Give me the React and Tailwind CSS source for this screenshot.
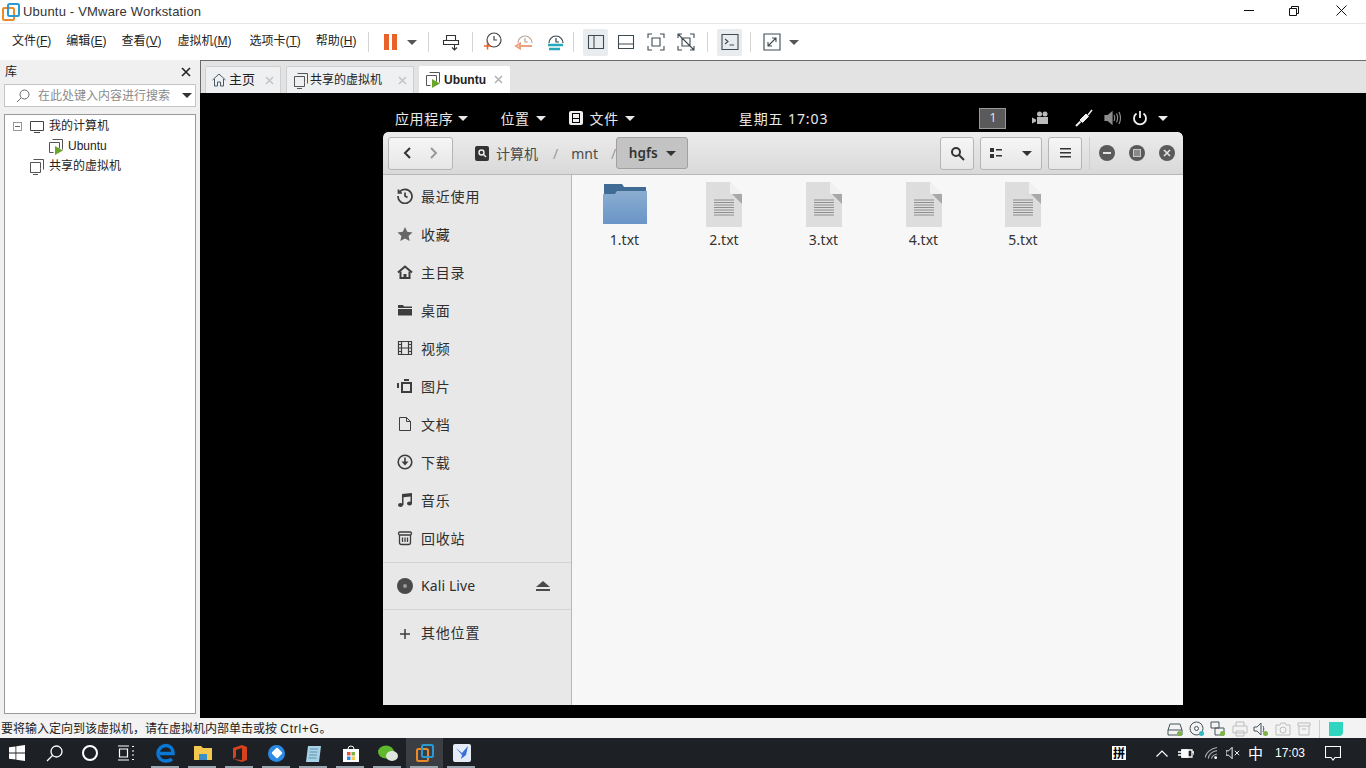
import React from "react";

const winFont = { fontFamily: '"Liberation Sans", "Noto Sans CJK SC", sans-serif' };

const Caret = ({ className = "", color = "border-t-[#444]" }) => (
    <span className={`inline-block w-0 h-0 border-x-[5px] border-x-transparent border-t-[5px] ${color} ${className}`} />
);

const Sep = ({ className = "" }) => <span className={`w-px h-[20px] bg-[#d4d4d4] shrink-0 ${className}`} />;

const Ic = ({ size = 24, vb = 24, className = "", children, stroke = "#3f4b52", sw = 1.2 }) => (
    <svg width={size} height={size} viewBox={`0 0 ${vb} ${vb}`} fill="none" stroke={stroke} strokeWidth={sw} className={`shrink-0 ${className}`}>
        {children}
    </svg>
);

const VmIcon = ({ play }) => (
    <svg width="17" height="17" viewBox="0 0 17 17" fill="none" stroke="#555" strokeWidth="1" className="shrink-0">
        <path d="M4.500 1.500h10v10M1.500 4.500h10v6M1.500 4.500v10h4" />
        {play ? <path d="M7 8l8 4.500L7 17z" fill="#6aa52c" stroke="none" /> : <path d="M1.500 14.500h10v-4M4 16.500h5" />}
    </svg>
);

const ClockIcon = ({ color, accent, kind }) => (
    <Ic size={24} stroke={color}>
        {kind === "add" ? <circle cx="13" cy="10" r="7" /> : <path d="M6 13a7 7 0 1 1 14 0" />}
        <path d={kind === "add" ? "M13 6v4h3" : "M13 8v4h3"} />
        {kind === "add" && <path d="M3 16h7M6.500 12.500v7" stroke={accent} strokeWidth="1.500" />}
        {kind === "back" && <path d="M7 16h13M4 16l4-2.500v5z" stroke={accent} strokeWidth="2" />}
        {kind === "tool" && <path d="M5 15h15M6 19h11" stroke={accent} strokeWidth="2.400" />}
    </Ic>
);

const menus = [
    ["文件", "F", "mr-[15px]"],
    ["编辑", "E", "mr-[15px]"],
    ["查看", "V", "mr-[16px]"],
    ["虚拟机", "M", "mr-[18px]"],
    ["选项卡", "T", "mr-[15px]"],
    ["帮助", "H", ""],
];

const Toolbar = () => (
    <div className="h-[36px] bg-white flex items-center pl-[12px] text-[12px] text-[#222]">
        {menus.map(([label, key, cls]) => (
            <span key={label} className={`${cls} whitespace-nowrap mb-[2px]`}>
                {label}(<u>{key}</u>)
            </span>
        ))}
        <Sep className="ml-[12px]" />
        <span className="flex gap-[3px] ml-[15px]">
            <span className="w-[5px] h-[16px] bg-[#e8622a]" />
            <span className="w-[5px] h-[16px] bg-[#e8622a]" />
        </span>
        <Caret className="ml-[10px]" color="border-t-[#555]" />
        <Sep className="ml-[11px]" />
        <Ic size={18} vb={18} className="ml-[13px]" stroke="#333" sw={1.100}>
            <path d="M4.500 2.500h9v5h-9zM1.500 7.500h15v4h-15zM12.500 11.500v5M10 14.500l2.500 2.500 2.500-2.500" />
        </Ic>
        <Sep className="ml-[12px]" />
        <span className="ml-[8px] flex gap-[7px]">
            <ClockIcon color="#444" accent="#e8622a" kind="add" />
            <ClockIcon color="#b9a394" accent="#eda27e" kind="back" />
            <ClockIcon color="#35454c" accent="#25a9b8" kind="tool" />
        </span>
        <Sep className="ml-[6px]" />
        <span className="ml-[9px] w-[25px] h-[27px] bg-[#e8ecee] rounded-[2px] flex items-center justify-center">
            <Ic size={18} vb={18} sw={1.100}><path d="M1.500 2.500h15v13h-15zM7 2.500v13" /></Ic>
        </span>
        <Ic size={18} vb={18} className="ml-[9px]" sw={1.100}><path d="M1.500 2.500h15v13h-15zM1.500 11h15" /></Ic>
        <Ic size={18} vb={18} className="ml-[12px]" sw={1.100}><path d="M1 5V1h4M13 1h4v4M17 13v4h-4M5 17H1v-4M5 5h8v8H5z" /></Ic>
        <Ic size={18} vb={18} className="ml-[12px]" sw={1.100}><path d="M1 5V1h4M13 1h4v4M17 13v4h-4M5 17H1v-4M5 5h8v8H5zM1 1l16 16" /></Ic>
        <Sep className="ml-[12px]" />
        <span className="ml-[9px] w-[25px] h-[27px] bg-[#e8ecee] rounded-[2px] flex items-center justify-center">
            <Ic size={18} vb={18} sw={1.100}><path d="M1 1.500h16v15H1zM4 6l3 2.500L4 11M8.500 12H13" /></Ic>
        </span>
        <Sep className="ml-[8px]" />
        <Ic size={18} vb={18} className="ml-[12px]" sw={1.100}><path d="M1 1h16v16H1zM5 13l8-8M9 5h4v4M5 9v4h4" /></Ic>
        <Caret className="ml-[8px]" color="border-t-[#555]" />
    </div>
);

const TreeRow = ({ indent, icon, label }) => (
    <div className={`h-[20px] flex items-center gap-[3px] ${indent}`}>
        {icon}
        <span className="text-[12px] text-[#222] whitespace-nowrap">{label}</span>
    </div>
);

const Library = () => (
    <div className="w-[200px] shrink-0 bg-[#f0f0f0] flex flex-col pl-[4px] pr-[4px]">
        <div className="h-[24px] flex items-center justify-between text-[12px] text-[#222] pl-px pr-[5px]">
            <span>库</span>
            <svg width="10" height="10" viewBox="0 0 10 10" stroke="#222" strokeWidth="1.600"><path d="M1 1l8 8M9 1L1 9" /></svg>
        </div>
        <div className="h-[23px] bg-white border border-[#c4c4c4] flex items-center pl-[11px] pr-[3px]">
            <svg width="14" height="14" viewBox="0 0 14 14" fill="none" stroke="#666" strokeWidth="1"><circle cx="8.500" cy="5.500" r="4.500" /><path d="M5 9l-4 4" /></svg>
            <span className="text-[12px] text-[#8a8a8a] ml-[8px] whitespace-nowrap">在此处键入内容进行搜索</span>
            <Caret className="ml-auto" color="border-t-[#333]" />
        </div>
        <div className="h-[600px] mt-[7px] bg-white border border-[#9a9a9a] pt-[1px]">
            <TreeRow
                indent="pl-[8px]"
                label="我的计算机"
                icon={
                    <>
                        <span className="w-[9px] h-[9px] border border-[#999] flex items-center justify-center mr-[1px]"><span className="w-[5px] h-px bg-[#666]" /></span>
                        <svg width="16" height="16" viewBox="0 0 16 16" fill="none" stroke="#444" strokeWidth="1" className="mr-[1px] ml-[3px]"><path d="M1.500 3.500h13v9h-13zM5 14.500h6" /></svg>
                    </>
                }
            />
            <TreeRow indent="pl-[43px]" label="Ubuntu" icon={<VmIcon play />} />
            <TreeRow indent="pl-[24px]" label="共享的虚拟机" icon={<VmIcon />} />
        </div>
    </div>
);

const CloseX = ({ color = "#c4c4c4" }) => (
    <svg width="9" height="9" viewBox="0 0 9 9" stroke={color} strokeWidth="1.500" className="shrink-0"><path d="M1 1l7 7M8 1L1 8" /></svg>
);

const Tabs = () => (
    <div className="h-[33px] bg-[#e3e3e3] flex items-end pl-[4px] gap-[5px] text-[12px] text-[#222] border-t border-l border-[#6b6b6b]">
        <div className="w-[76px] h-[27px] bg-[#eef0f2] border border-b-0 border-[#cfcfcf] rounded-t-[2px] flex items-center pl-[5px]">
            <svg width="16" height="16" viewBox="0 0 16 16" fill="none" stroke="#4a5a66" strokeWidth="1"><path d="M1.500 8L8 2l6.500 6M3.500 7v7h3v-4h3v4h3V7" /></svg>
            <span className="ml-[2px] text-[13px]">主页</span>
            <span className="ml-auto mr-[6px]"><CloseX /></span>
        </div>
        <div className="w-[128px] h-[27px] bg-[#eef0f2] border border-b-0 border-[#cfcfcf] rounded-t-[2px] flex items-center pl-[6px]">
            <VmIcon />
            <span className="whitespace-nowrap">共享的虚拟机</span>
            <span className="ml-auto mr-[6px]"><CloseX /></span>
        </div>
        <div className="w-[91px] h-[27px] bg-white rounded-t-[2px] flex items-center pl-[6px]">
            <VmIcon play />
            <span className="ml-[2px] font-bold">Ubuntu</span>
            <span className="ml-auto mr-[7px]"><CloseX color="#b0b0b0" /></span>
        </div>
    </div>
);

const gnomeFont = { fontFamily: '"Noto Sans", "Noto Sans CJK SC", sans-serif' };

const GnomeBar = () => (
    <div className="h-[39px] flex items-center pt-[11px] text-[14px] text-[#e8e8e8]" style={gnomeFont}>
        <span className="ml-[195px] tracking-[0.6px]">应用程序</span>
        <Caret className="ml-[5px]" color="border-t-[#e8e8e8]" />
        <span className="ml-[32px] tracking-[0.6px]">位置</span>
        <Caret className="ml-[6px]" color="border-t-[#e8e8e8]" />
        <span className="ml-[23px] w-[14px] h-[14px] bg-[#eee] rounded-[2px] flex items-center justify-center">
            <span className="w-[8px] h-[10px] border border-black flex flex-col justify-center"><span className="h-px bg-black" /></span>
        </span>
        <span className="ml-[7px] tracking-[0.6px]">文件</span>
        <Caret className="ml-[6px]" color="border-t-[#e8e8e8]" />
        <span className="ml-[104px] tracking-[0.9px] whitespace-nowrap">星期五 17:03</span>
        <span className="ml-[151px] w-[27px] h-[21px] bg-[#5a5a5a] border border-[#999] flex items-center justify-center text-[13px] text-[#ddd]">1</span>
        <svg width="16" height="14" viewBox="0 0 16 14" fill="#bbb" className="ml-[26px]">
            <circle cx="7.500" cy="3" r="2.500" /><circle cx="13" cy="3" r="2.500" /><path d="M5 6h11v7H5zM0 6.500l4 2v2l-4 2z" />
        </svg>
        <svg width="18" height="18" viewBox="0 0 18 18" stroke="#eee" fill="none" className="ml-[27px]">
            <path d="M17 1l-4 5" strokeWidth="1.500" /><path d="M11 5l2.500 2.500-6 6L5 11z" fill="#eee" /><path d="M5.500 12.500L1 17" strokeWidth="2" />
        </svg>
        <svg width="17" height="16" viewBox="0 0 17 16" fill="none" stroke="#8c8c8c" strokeWidth="1.200" className="ml-[11px]">
            <path d="M1 5.500h3l4-3.500v12l-4-3.500H1z" fill="#8c8c8c" /><path d="M10 5c1 2 1 4 0 6M12.500 3.500c1.500 3 1.500 6 0 9M15 2c2 4 2 8 0 12" />
        </svg>
        <svg width="16" height="16" viewBox="0 0 16 16" fill="none" stroke="#f2f2f2" strokeWidth="1.800" className="ml-[11px]">
            <path d="M8 1v7M4.500 3.500a6 6 0 1 0 7 0" />
        </svg>
        <Caret className="ml-[10px]" color="border-t-[#eee]" />
    </div>
);

const HeaderBtn = ({ w, children }) => (
    <span className={`${w} h-[33px] rounded-[3px] border border-[#b5b5b5] bg-gradient-to-b from-[#f6f6f6] to-[#e6e6e6] flex items-center justify-center shrink-0`}>
        {children}
    </span>
);

const WinBtn = ({ children }) => (
    <span className="w-[16px] h-[16px] rounded-full bg-[#5a5a5a] flex items-center justify-center">{children}</span>
);

const Header = () => (
    <div className="h-[43px] bg-gradient-to-b from-[#ececec] to-[#d9d9d9] border-b border-[#b8b8b8] rounded-t-[5px] flex items-center pl-[5px] pr-[8px] text-[14px] text-[#4a4a4a] shrink-0">
        <HeaderBtn w="w-[65px]">
            <span className="flex items-center gap-[17px]">
                <svg width="10" height="14" viewBox="0 0 10 14" fill="none" stroke="#333" strokeWidth="2"><path d="M8 2L3 7l5 5" /></svg>
                <svg width="10" height="14" viewBox="0 0 10 14" fill="none" stroke="#999" strokeWidth="2"><path d="M2 2l5 5-5 5" /></svg>
            </span>
        </HeaderBtn>
        <span className="ml-[22px] w-[14px] h-[15px] bg-[#333] rounded-[2px] flex items-center justify-center">
            <svg width="10" height="10" viewBox="0 0 10 10" fill="none" stroke="#eee" strokeWidth="1.400"><circle cx="4.500" cy="4.500" r="2.500" /><path d="M6.500 6.500L9 9" /></svg>
        </span>
        <span className="ml-[7px]">计算机</span>
        <span className="ml-[15px] text-[#999]">/</span>
        <span className="ml-[13px]">mnt</span>
        <span className="ml-[13px] text-[#999]">/</span>
        <span className="w-[72px] h-[32px] rounded-[3px] border border-[#a0a0a0] bg-[#c3c3c3] flex items-center justify-center gap-[8px] text-[13.500px] font-semibold text-[#333]">
            hgfs
            <Caret color="border-t-[#333]" />
        </span>
        <span className="ml-auto flex items-center">
            <HeaderBtn w="w-[34px]">
                <svg width="15" height="15" viewBox="0 0 15 15" fill="none" stroke="#333" strokeWidth="2"><circle cx="6" cy="6" r="4" /><path d="M9 9l5 5" /></svg>
            </HeaderBtn>
            <span className="ml-[6px]">
                <HeaderBtn w="w-[62px]">
                    <svg width="12" height="10" viewBox="0 0 12 10" fill="#333"><path d="M0 0h4v4H0zM0 6h4v4H0zM6 1h6v1.600H6zM6 7h6v1.600H6z" /></svg>
                    <Caret className="ml-[20px]" color="border-t-[#333]" />
                </HeaderBtn>
            </span>
            <span className="ml-[6px]">
                <HeaderBtn w="w-[34px]">
                    <svg width="11" height="10" viewBox="0 0 11 10" fill="#333"><path d="M0 0h11v1.600H0zM0 4h11v1.600H0zM0 8h11v1.600H0z" /></svg>
                </HeaderBtn>
            </span>
            <span className="ml-[7px] w-px h-[33px] bg-[#cfcfcf]" />
            <span className="ml-[9px] flex gap-[14px]">
                <WinBtn><span className="w-[8px] h-[2px] bg-[#e4e4e4]" /></WinBtn>
                <WinBtn><span className="w-[8px] h-[8px] border-[1.500px] border-[#c8c8c8] bg-[#8a8a8a]" /></WinBtn>
                <WinBtn>
                    <svg width="8" height="8" viewBox="0 0 8 8" stroke="#e4e4e4" strokeWidth="1.600"><path d="M1 1l6 6M7 1L1 7" /></svg>
                </WinBtn>
            </span>
        </span>
    </div>
);

const sc = "#3d3d3d";
const places = [
    ["最近使用", <svg key="a" width="16" height="16" viewBox="0 0 16 16" fill="none" stroke={sc} strokeWidth="1.700"><path d="M2.500 4A7 7 0 1 1 1 8M1.500 1.500V5H5M8 4.500V8l2.500 1.500" /></svg>],
    ["收藏", <svg key="b" width="16" height="16" viewBox="0 0 16 16" fill="#666"><path d="M8 1l2.200 4.800 5.300.6-3.900 3.500 1.100 5.100L8 12.400 3.300 15l1.100-5.100L.5 6.400l5.300-.6z" /></svg>],
    ["主目录", <svg key="c" width="16" height="16" viewBox="0 0 16 16" fill="none" stroke={sc} strokeWidth="2"><path d="M1 8.500L8 2.500l7 6" /><path d="M3.500 7.500V14h9V7.500" /><path d="M6.500 14v-4h3v4" fill={sc} stroke="none" /></svg>],
    ["桌面", <svg key="d" width="16" height="16" viewBox="0 0 16 16" fill={sc}><path d="M1 3h5l1 1.500h8V6H1zM1 7h14v6.500H1z" /></svg>],
    ["视频", <svg key="e" width="16" height="16" viewBox="0 0 16 16" fill="none" stroke={sc} strokeWidth="1.200"><path d="M1.500 1.500h13v13h-13zM4.500 1.500v13M11.500 1.500v13M4.500 8h7M1.500 4.500h3M1.500 8h3M1.500 11.500h3M11.500 4.500h3M11.500 8h3M11.500 11.500h3" /></svg>],
    ["图片", <svg key="f" width="16" height="16" viewBox="0 0 16 16" fill="none" stroke={sc} strokeWidth="2"><path d="M5 5h9v9H5zM7 2h5M1 5v5" /></svg>],
    ["文档", <svg key="g" width="16" height="16" viewBox="0 0 16 16" fill="none" stroke={sc} strokeWidth="1"><path d="M2.500 1.500h7l4 4v9h-11zM9.500 1.500v4h4" /></svg>],
    ["下载", <svg key="h" width="16" height="16" viewBox="0 0 16 16" fill="none" stroke={sc} strokeWidth="1.600"><circle cx="8" cy="8" r="6.800" /><path d="M8 3.500V9" /><path d="M4.500 7.500h7L8 11.500z" fill={sc} stroke="none" /></svg>],
    ["音乐", <svg key="i" width="16" height="16" viewBox="0 0 16 16" fill={sc}><path d="M5 2l10-1v10.500h-1.500V4.500l-7 .7V13H5z" /><ellipse cx="3.500" cy="13" rx="2.500" ry="2" /><ellipse cx="12.500" cy="11.500" rx="2.500" ry="2" /></svg>],
    ["回收站", <svg key="j" width="16" height="16" viewBox="0 0 16 16" fill="none" stroke={sc} strokeWidth="1.300"><rect x="1.500" y="2" width="13" height="3" rx="1.500" /><path d="M2.500 5v7.500a2 2 0 0 0 2 2h7a2 2 0 0 0 2-2V5M5.500 7.500v4.500M8 7.500v4.500M10.500 7.500v4.500" /></svg>],
];

const PlaceRow = ({ icon, label, h = "h-[38px]", labelCls = "tracking-[0.8px]", children }) => (
    <div className={`${h} flex items-center pl-[14px] shrink-0`}>
        <span className="w-[16px] flex justify-center">{icon}</span>
        <span className={`ml-[8px] text-[14px] text-[#2e2e2e] ${labelCls}`}>{label}</span>
        {children}
    </div>
);

const Sidebar = () => (
    <div className="w-[189px] shrink-0 bg-[#e8e8e8] border-r border-[#b8b8b8] flex flex-col pt-[2px]">
        {places.map(([label, icon]) => (
            <PlaceRow key={label} label={label} icon={icon} />
        ))}
        <div className="h-px bg-[#d4d4d4] mt-[5px]" />
        <PlaceRow
            h="h-[46px]"
            label="Kali Live"
            labelCls="tracking-[0.1px] mb-[2px]"
            icon={
                <span className="w-[16px] h-[16px] rounded-full bg-[#4a4a4a] flex items-center justify-center">
                    <span className="w-[4px] h-[4px] rounded-full bg-[#999]" />
                </span>
            }
        >
            <span className="ml-auto mr-[21px] flex flex-col items-center gap-[2px]">
                <span className="w-0 h-0 border-x-[7px] border-x-transparent border-b-[6px] border-b-[#4a4a4a]" />
                <span className="w-[14px] h-[2px] bg-[#4a4a4a]" />
            </span>
        </PlaceRow>
        <div className="h-px bg-[#d4d4d4]" />
        <PlaceRow
            h="h-[47px]"
            label="其他位置"
            labelCls="tracking-[0.8px] mb-[2px]"
            icon={<svg width="10" height="10" viewBox="0 0 10 10" stroke={sc} strokeWidth="1.500"><path d="M5 0v10M0 5h10" /></svg>}
        />
    </div>
);

const FolderIcon = () => (
    <svg width="44" height="40" viewBox="0 0 44 40">
        <defs>
            <linearGradient id="fold" x1="0" y1="0" x2="0" y2="1">
                <stop offset="0" stopColor="#8badd0" />
                <stop offset="1" stopColor="#6a95c8" />
            </linearGradient>
        </defs>
        <path d="M1 0h18l2 3h22v10H1z" fill="#3f6b95" />
        <path d="M0 10h12l2-3h30v33H0z" fill="url(#fold)" />
    </svg>
);

const TextFileIcon = () => (
    <svg width="36" height="46" viewBox="0 0 36 46">
        <path d="M0 1h24l12 12v33H0z" fill="#dddddd" />
        <path d="M24 1l12 12H24z" fill="#f1f1f1" />
        <path d="M26 13h10v10z" fill="#a8a8a8" />
        <path d="M8 19h20M8 21.500h20M8 24h20M8 26.500h20M8 29h20M8 31.500h20M8 34h20" stroke="#8e8e8e" strokeWidth="1" />
    </svg>
);

const files = [
    { name: "1.txt", folder: true, w: "w-[87px]" },
    { name: "2.txt", w: "w-[112px]" },
    { name: "3.txt", w: "w-[87px]" },
    { name: "4.txt", w: "w-[113px]" },
    { name: "5.txt", w: "w-[86px]" },
];

const Files = () => (
    <div className="flex-1 bg-[#f7f7f7] flex items-start pl-[9px] pt-[6px]">
        {files.map(f => (
            <div key={f.name} className={`${f.w} flex flex-col items-center shrink-0`}>
                <div className="h-[46px] flex items-center">{f.folder ? <FolderIcon /> : <TextFileIcon />}</div>
                <span className="mt-[4px] text-[14px] leading-[18px] text-[#333]">{f.name}</span>
            </div>
        ))}
    </div>
);

const VmScreen = () => (
    <div className="flex-1 bg-black flex flex-col min-w-0">
        <GnomeBar />
        <div className="ml-[183px] w-[800px] h-[573px] flex flex-col rounded-t-[5px] overflow-hidden" style={gnomeFont}>
            <Header />
            <div className="flex flex-1 min-h-0">
                <Sidebar />
                <Files />
            </div>
        </div>
    </div>
);

const StatusBar = () => (
    <div className="h-[20px] bg-[#f3f3f3] flex items-center pt-[2px] text-[12px] text-[#222] pl-px">
        <span className="whitespace-nowrap">要将输入定向到该虚拟机，请在虚拟机内部单击或按 <span className="tracking-[0.7px]">Ctrl+G</span>。</span>
        <span className="ml-auto flex items-center gap-[5.500px] mr-[23px]">
            <svg width="16" height="16" viewBox="0 0 16 16" fill="none" stroke="#44545c"><path d="M1 9l2-6h10l2 6v5H1zM1 9h14" /><circle cx="12.500" cy="12.500" r="2.500" fill="#7cb342" stroke="none" /></svg>
            <svg width="16" height="16" viewBox="0 0 16 16" fill="none" stroke="#44545c"><circle cx="7.500" cy="7.500" r="6.500" /><circle cx="7.500" cy="7.500" r="2" /><circle cx="12.500" cy="12.500" r="2.500" fill="#35b8c4" stroke="none" /></svg>
            <svg width="16" height="16" viewBox="0 0 16 16" fill="none" stroke="#44545c"><path d="M1 1h8v6H1zM5 7v7h9V7H5" /><circle cx="12.500" cy="12.500" r="2.500" fill="#7cb342" stroke="none" /></svg>
            <svg width="16" height="16" viewBox="0 0 16 16" fill="none" stroke="#bdbdbd"><path d="M4 5V1h8v4M1 5h14v7H1zM4 10h8v5H4z" /></svg>
            <svg width="16" height="16" viewBox="0 0 16 16" fill="none" stroke="#44545c"><path d="M1 6h3l4-4v12l-4-4H1zM10 5c1 2 1 4 0 6" /><circle cx="12.500" cy="12.500" r="2.500" fill="#7cb342" stroke="none" /></svg>
            <svg width="16" height="16" viewBox="0 0 16 16" fill="none" stroke="#bdbdbd"><path d="M1 4h4l1-2h4l1 2h4v10H1z" /><circle cx="8" cy="9" r="3" /></svg>
            <svg width="16" height="16" viewBox="0 0 16 16" fill="none" stroke="#bdbdbd"><path d="M2 2h12v3H2zM3 5v9h10V5M6 8h4" /></svg>
            <span className="w-px h-[18px] bg-[#cfcfcf] ml-px" />
            <span className="w-[14px] h-[14px] bg-[#2fd5bf] rounded-br-[4px] ml-[4px]" />
        </span>
    </div>
);

const TaskApp = ({ active, children }) => (
    <span className={`w-[37px] h-[30px] flex items-center justify-center relative shrink-0 ${active ? "bg-[#3b3e42]" : ""}`}>
        {children}
        <span className="absolute bottom-0 left-[4px] right-[5px] h-[2px] bg-[#9aa6b0]" />
    </span>
);

const Taskbar = () => (
    <div className="h-[30px] bg-[#1d2126] flex items-center text-white">
        <svg width="16" height="16" viewBox="0 0 16 16" fill="#fff" className="ml-[9px]">
            <path d="M0 2.300l6.500-.9v6.200H0zM7.300 1.300L16 0v7.600H7.300zM0 8.400h6.500v6.200L0 13.700zM7.300 8.400H16V16l-8.700-1.300z" />
        </svg>
        <svg width="17" height="17" viewBox="0 0 17 17" fill="none" stroke="#fff" strokeWidth="1.300" className="ml-[21px]">
            <circle cx="10.500" cy="6.500" r="5.500" /><path d="M6.500 10.500L1 16" />
        </svg>
        <span className="ml-[19px] w-[16px] h-[16px] rounded-full border-[2.500px] border-white" />
        <svg width="18" height="16" viewBox="0 0 18 16" fill="none" stroke="#fff" strokeWidth="1.200" className="ml-[19px]">
            <path d="M1 1h11M1 15h11M2.500 4h8v8h-8zM15 1.500h2M15 6h2M15 10h2M15 14.500h2" />
        </svg>
        <span className="ml-[12px] flex items-center">
            <TaskApp>
                <svg width="20" height="20" viewBox="0 0 20 20" fill="none" stroke="#0a78d4" strokeWidth="3.500">
                    <path d="M4 10.500h13c0-5-3-8-7-8s-8 3.500-8 8 3.500 7.500 8 7.500c3 0 5-1 6-2" />
                </svg>
            </TaskApp>
            <TaskApp>
                <svg width="18" height="16" viewBox="0 0 18 16"><path d="M0 1h7l2 2h9v12H0z" fill="#f4c84f" /><path d="M5 9h8v6H5z" fill="#3a8fc6" /></svg>
            </TaskApp>
            <TaskApp>
                <svg width="14" height="17" viewBox="0 0 14 17" fill="#d4431b"><path d="M0 3l9-3 5 2v13l-5 2-9-3 9 1V3L3 5v7l-3 2z" /></svg>
            </TaskApp>
            <TaskApp>
                <span className="w-[17px] h-[17px] rounded-full bg-[#2a8ae4] flex items-center justify-center">
                    <span className="w-[8px] h-[8px] bg-white rotate-45 rounded-[1px]" />
                </span>
            </TaskApp>
            <TaskApp>
                <svg width="15" height="17" viewBox="0 0 15 17"><path d="M2 1h13l-2 16H0z" fill="#a8d3e6" /><path d="M4 4h8M3.500 7h8M3 10h8M2.500 13h8" stroke="#5e93ab" strokeWidth="1" /></svg>
            </TaskApp>
            <TaskApp>
                <svg width="16" height="17" viewBox="0 0 16 17"><path d="M0 4h16v13H0z" fill="#fff" /><path d="M5 4a3 3 0 0 1 6 0" fill="none" stroke="#fff" /><path d="M4 7h3.500v3.500H4z" fill="#e8543a" /><path d="M8.500 7H12v3.500H8.500z" fill="#7cb342" /><path d="M4 11.500h3.500V15H4z" fill="#2a8ae4" /><path d="M8.500 11.500H12V15H8.500z" fill="#f4c84f" /></svg>
            </TaskApp>
            <TaskApp>
                <svg width="20" height="17" viewBox="0 0 20 17"><ellipse cx="8" cy="7" rx="8" ry="6.500" fill="#5fb92d" /><ellipse cx="14" cy="11" rx="6" ry="5" fill="#dfe6dc" /></svg>
            </TaskApp>
            <TaskApp active>
                <svg width="18" height="18" viewBox="0 0 18 18" fill="none" strokeWidth="2"><rect x="1" y="5" width="11" height="12" rx="1.500" stroke="#e88a2a" /><rect x="6" y="1" width="11" height="12" rx="1.500" stroke="#2a9ad4" /></svg>
            </TaskApp>
            <TaskApp>
                <svg width="18" height="18" viewBox="0 0 18 18"><rect width="18" height="18" rx="2" fill="#e4ecf8" /><path d="M3 4l6 5 6-7-2 9-5 4 1-4z" fill="#3c6fd6" /></svg>
            </TaskApp>
        </span>
        <span className="ml-auto flex items-center">
            <span className="w-[14px] h-[14px] bg-white text-black text-[12px] leading-[14px] text-center font-bold" style={{ fontFamily: '"Noto Sans CJK SC", sans-serif' }}>拼</span>
            <svg width="12" height="7" viewBox="0 0 12 7" fill="none" stroke="#fff" strokeWidth="1.200" className="ml-[30px]"><path d="M.5 6.500l5.500-5.500 5.500 5.500" /></svg>
            <svg width="16" height="12" viewBox="0 0 16 12" fill="none" stroke="#fff" strokeWidth="1.300" className="ml-[10px]"><path d="M4 3h10v7H4zM14 5h2v3M4 5H0M4 8H0" /><path d="M4 3h6v7H4z" fill="#fff" /></svg>
            <svg width="13" height="14" viewBox="0 0 14 14" fill="none" stroke="#aaa" strokeWidth="1.200" className="ml-[11px]"><path d="M0 12C1 7 6 2 13 1M3.500 13C4 9 7.500 5 13 4.500M7 13c.5-2.500 3-4.500 6-5" /><circle cx="11.500" cy="12" r="1.500" fill="#fff" stroke="none" /></svg>
            <svg width="14" height="14" viewBox="0 0 16 14" fill="none" stroke="#fff" strokeWidth="1.100" className="ml-[8px]"><path d="M0 4.500h3l4-4v13l-4-4H0zM10 4.500l5 5M15 4.500l-5 5" /></svg>
            <span className="ml-[8px] text-[15px]" style={{ fontFamily: '"Noto Sans CJK SC", sans-serif' }}>中</span>
            <span className="ml-[12px] text-[12px]" style={winFont}>17:03</span>
            <svg width="16" height="15" viewBox="0 0 16 15" fill="none" stroke="#fff" strokeWidth="1.100" className="ml-[20px] mr-[25px]"><path d="M.5.500h15v11H10l-2 2.500-2-2.500H.5z" /></svg>
        </span>
    </div>
);

const App = () => (
    <div className="w-[1366px] h-[768px] overflow-hidden flex flex-col bg-white" style={winFont}>
        <div className="h-[24px] bg-white border-b border-[#e6e6e6] flex items-center pl-[2px] shrink-0">
            <svg width="18" height="18" viewBox="0 0 18 18" fill="none" strokeWidth="2"><rect x="1" y="5" width="11" height="12" rx="1.500" stroke="#e88a2a" /><rect x="6" y="1" width="11" height="12" rx="1.500" stroke="#2a9ad4" /></svg>
            <span className="ml-[3px] text-[13px] text-[#333] tracking-[0.19px]">Ubuntu - VMware Workstation</span>
            <span className="ml-auto flex items-center mb-[2px]">
                <span className="w-[10px] h-px bg-[#111] mr-[35px]" />
                <svg width="10" height="10" viewBox="0 0 10 10" fill="none" stroke="#111" className="mr-[37px]"><path d="M.5 2.500h7v7h-7zM2.500 2.500v-2h7v7h-2" /></svg>
                <svg width="11" height="11" viewBox="0 0 11 11" stroke="#111" className="mr-[19px]"><path d="M.5.500l10 10M10.500.500l-10 10" /></svg>
            </span>
        </div>
        <Toolbar />
        <div className="flex flex-1 min-h-0">
            <Library />
            <div className="flex-1 flex flex-col min-w-0">
                <Tabs />
                <VmScreen />
            </div>
        </div>
        <StatusBar />
        <Taskbar />
    </div>
);

export default App;
